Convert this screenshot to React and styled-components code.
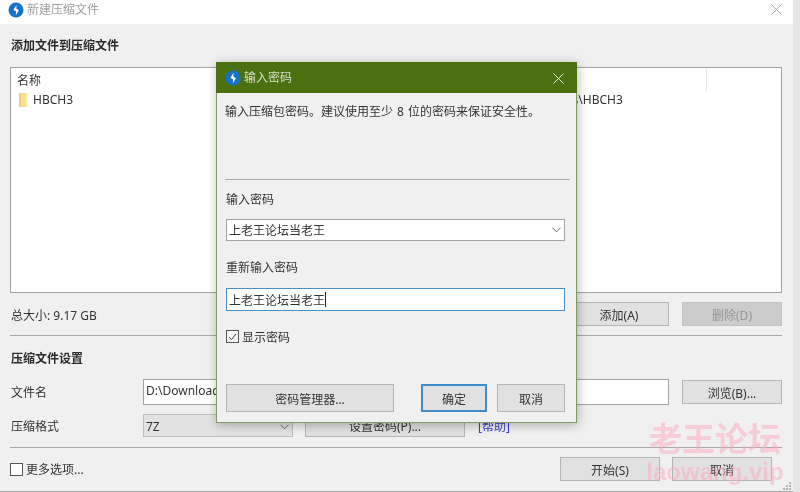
import React from "react";
import styled, {createGlobalStyle} from "styled-components";

const GlobalStyle = createGlobalStyle`
  html, body {
    margin: 0;
    padding: 0;
    background: #e6e6e6;
  }
  body {
    font-family: "Noto Sans", "Noto Sans CJK SC", sans-serif;
    font-size: 12px;
    color: #333;
  }
`;

const Page = styled.div`
  position: relative;
  width: 800px;
  height: 492px;
  overflow: hidden;
  filter: blur(0.45px);
`;

const Win = styled.div`
  width: 793px;
  height: 492px;
  box-sizing: border-box;
  background: #f0f0f0;
  border-bottom: 1px solid #a8a8a8;
`;

const TitleBar = styled.div`
  height: 24px;
  background: #fff;
  display: flex;
  align-items: flex-start;
  padding: 2px 11px 0 8px;
  box-sizing: border-box;
  color: #a0a0a0;
  line-height: 16px;
  gap: 3px;
`;

const CloseX = styled.svg`
  margin-left: auto;
  margin-top: 2px;
  width: 11px;
  height: 11px;
  stroke: ${(p) => p.$color || "#aaa"};
  stroke-width: 1;
  fill: none;
  flex: none;
`;

const Content = styled.div`
  padding: 0 11px 0 10px;
`;

const SectionTitle = styled.div`
  font-weight: 700;
  line-height: 16px;
  color: #2b2b2b;
  margin-top: ${(p) => p.$top}px;
  padding-left: 1px;
`;

const FileList = styled.div`
  height: 226px;
  box-sizing: border-box;
  margin-top: 13px;
  background: #fff;
  border: 1px solid #a3a3a3;
`;

const ListRow = styled.div`
  display: grid;
  grid-template-columns: 488px 208px 1fr;
  height: ${(p) => p.$height}px;
  line-height: 16px;
`;

const Cell = styled.div`
  padding-left: ${(p) => p.$pad || 0}px;
  padding-top: ${(p) => p.$padTop || 0}px;
  box-sizing: border-box;
  display: flex;
  align-items: center;
  gap: 5px;
  white-space: nowrap;
  ${(p) => p.$rule && "box-shadow: inset -1px 0 0 #e8e8e8;"}
`;

const InfoRow = styled.div`
  display: flex;
  align-items: center;
  margin-top: ${(p) => p.$top}px;
  gap: ${(p) => p.$gap || 0}px;
`;

const SizeLabel = styled.span`
  padding: 1px 0 0 1px;
  margin-right: auto;
`;

const Btn = styled.div`
  width: ${(p) => p.$w}px;
  height: ${(p) => p.$h || 24}px;
  box-sizing: border-box;
  flex: none;
  display: flex;
  align-items: center;
  justify-content: center;
  padding-top: 1px;
  background: ${(p) => (p.$disabled ? "#cccccc" : "#e1e1e1")};
  border: ${(p) => (p.$primary ? "2px solid #3f8ccb" : `1px solid ${p.$disabled ? "#c4c4c4" : "#b4b4b4"}`)};
  color: ${(p) => (p.$disabled ? "#969696" : "#333")};
  white-space: nowrap;
`;

const Rule = styled.div`
  height: 1px;
  background: #a9a9a9;
  margin-top: ${(p) => p.$top}px;
  margin-right: ${(p) => p.$right || 0}px;
  margin-left: ${(p) => p.$left || 0}px;
`;

const FieldLabel = styled.div`
  width: 133px;
  flex: none;
  padding-left: 1px;
  box-sizing: border-box;
`;

const TextBox = styled.div`
  width: ${(p) => p.$w || "auto"};
  height: ${(p) => p.$h || 26}px;
  margin-top: ${(p) => p.$top || 0}px;
  box-sizing: border-box;
  flex: none;
  display: flex;
  align-items: center;
  overflow: hidden;
  padding: ${(p) => p.$padTop || 0}px 3px ${(p) => p.$padBottom || 0}px 2px;
  white-space: nowrap;
  background: ${(p) => p.$bg || "#fff"};
  border: 1px solid ${(p) => p.$border || "#a3a3a3"};
`;

const BrowseBtn = styled(Btn)`
  margin-left: 13px;
`;

const PasswordBtn = styled(Btn)`
  margin: 0 13px 0 12px;
`;

const ManagerBtn = styled(Btn)`
  margin-right: auto;
`;

const HelpLink = styled.span`
  color: #3a3ad0;
  padding-top: 1px;
`;

const CheckBox = styled.span`
  width: 13px;
  height: 13px;
  box-sizing: border-box;
  flex: none;
  display: flex;
  align-items: center;
  justify-content: center;
  background: ${(p) => (p.$checked ? "#f4f4f4" : "#fff")};
  border: 1px solid #555;
`;

const CheckLabel = styled.label`
  display: flex;
  align-items: center;
  gap: 3px;
  height: 13px;
  margin-right: auto;
`;

const BottomRow = styled(InfoRow)`
  padding-right: 10px;
`;

const Modal = styled.div`
  position: absolute;
  left: 216px;
  top: 62px;
  width: 361px;
  height: 361px;
  box-sizing: border-box;
  background: #f0f0f0;
  border: 1px solid #7f9a63;
  box-shadow: 1px 2px 10px rgba(0, 0, 0, 0.28);
`;

const ModalHead = styled.div`
  height: 31px;
  margin: -1px -1px 0;
  padding: 0 13px 0 9px;
  background: #4b7012;
  color: #d6e0c4;
  display: flex;
  align-items: center;
  gap: 3px;
  line-height: 16px;
`;

const ModalBody = styled.div`
  padding: 11px 11px 0 9px;
`;

const Line = styled.div`
  line-height: 16px;
  margin-top: ${(p) => p.$top || 0}px;
`;

const Intro = styled(Line)`
  margin-left: -1px;
  word-spacing: 1px;
`;

const Caret = styled.span`
  width: 1px;
  height: 15px;
  background: #222;
`;

const Chevron = styled.svg`
  margin-left: auto;
  width: 9px;
  height: 6px;
  stroke: #666;
  fill: none;
  flex: none;
`;

const Watermark = styled.div`
  position: absolute;
  left: 646px;
  top: 420px;
  width: 138px;
  text-align: center;
  color: rgba(252, 165, 185, 0.48);
  font-weight: 700;
  pointer-events: none;
`;

const MarkTitle = styled.div`
  font-size: 33px;
  line-height: 38px;
  white-space: nowrap;
`;

const MarkSub = styled.div`
  font-family: "Liberation Sans", sans-serif;
  font-size: 24px;
  line-height: 26px;
  margin-top: 1px;
  white-space: nowrap;
`;

const Grip = styled.svg`
  position: absolute;
  left: 782px;
  top: 481px;
  width: 9px;
  height: 9px;
  fill: #b5b5b5;
`;

const AppIcon = () => (
    <svg width="16" height="16" viewBox="0 0 16 16" style={{flex: "none"}}>
        <circle cx="8" cy="8" r="7.5" fill="#1672c8"/>
        <path d="M8.6 2.8 8.3 6.6l2.6 1.7-3.1 4.9.3-3.8-2.6-1.7z" fill="#fff"/>
    </svg>
);

const FolderIcon = () => (
    <svg width="9" height="14" viewBox="0 0 9 14" style={{flex: "none", marginLeft: "2px"}}>
        <rect width="9" height="14" fill="#fbe08f"/>
        <rect width="2" height="14" fill="#f4cd68"/>
        <rect x="7" width="2" height="14" fill="#fff0bd"/>
    </svg>
);

const Tick = () => (
    <svg width="9" height="8" viewBox="0 0 9 8" fill="none" stroke="#444" strokeWidth="1">
        <path d="M1 4l2.4 2.6L8 1"/>
    </svg>
);

const X = ({color}) => (
    <CloseX $color={color} viewBox="0 0 11 11">
        <path d="M.5.5l10 10M10.5.5l-10 10"/>
    </CloseX>
);

const Down = () => (
    <Chevron viewBox="0 0 9 6">
        <path d="M.5.8 4.5 4.8 8.5.8"/>
    </Chevron>
);

const App = () => {
    return (
        <Page>
            <GlobalStyle/>
            <Win>
                <TitleBar>
                    <AppIcon/>
                    <span>新建压缩文件</span>
                    <X/>
                </TitleBar>
                <Content>
                    <SectionTitle $top={14}>添加文件到压缩文件</SectionTitle>
                    <FileList>
                        <ListRow $height={24}>
                            <Cell $pad={6} $padTop={1}>名称</Cell>
                            <Cell $rule>路径</Cell>
                            <Cell/>
                        </ListRow>
                        <ListRow $height={16}>
                            <Cell $pad={6}><FolderIcon/>HBCH3</Cell>
                            <Cell>D:\Downloads\HBCH3</Cell>
                            <Cell/>
                        </ListRow>
                    </FileList>
                    <InfoRow $top={9} $gap={13}>
                        <SizeLabel>总大小: 9.17 GB</SizeLabel>
                        <Btn $w={100}>添加(A)</Btn>
                        <Btn $w={100} $disabled>删除(D)</Btn>
                    </InfoRow>
                    <Rule $top={9}/>
                    <SectionTitle $top={15}>压缩文件设置</SectionTitle>
                    <InfoRow $top={12}>
                        <FieldLabel>文件名</FieldLabel>
                        <TextBox $w="526px" $padBottom={3}>D:\Downloads\HBCH3.7z</TextBox>
                        <BrowseBtn $w={100}>浏览(B)...</BrowseBtn>
                    </InfoRow>
                    <InfoRow $top={9}>
                        <FieldLabel>压缩格式</FieldLabel>
                        <TextBox $w="150px" $h={23} $padTop={2} $bg="#e2e2e2" $border="#bdbdbd">7Z<Down/></TextBox>
                        <PasswordBtn $w={160} $h={23}>设置密码(P)...</PasswordBtn>
                        <HelpLink>[帮助]</HelpLink>
                    </InfoRow>
                    <Rule $top={10}/>
                    <BottomRow $top={9} $gap={12}>
                        <CheckLabel><CheckBox/>更多选项...</CheckLabel>
                        <Btn $w={100}>开始(S)</Btn>
                        <Btn $w={100}>取消</Btn>
                    </BottomRow>
                </Content>
            </Win>

            <Modal>
                <ModalHead>
                    <AppIcon/>
                    <span>输入密码</span>
                    <X color="#e6eedb"/>
                </ModalHead>
                <ModalBody>
                    <Intro>输入压缩包密码。建议使用至少 8 位的密码来保证安全性。</Intro>
                    <Rule $top={59} $right={-5} $left={-1}/>
                    <Line $top={12}>输入密码</Line>
                    <TextBox $h={22} $top={11}>上老王论坛当老王<Down/></TextBox>
                    <Line $top={19}>重新输入密码</Line>
                    <TextBox $h={23} $top={12} $border="#4a90c8">上老王论坛当老王<Caret/></TextBox>
                    <InfoRow $top={19}>
                        <CheckLabel><CheckBox $checked><Tick/></CheckBox>显示密码</CheckLabel>
                    </InfoRow>
                    <InfoRow $top={41} $gap={10}>
                        <ManagerBtn $w={168} $h={28}>密码管理器...</ManagerBtn>
                        <Btn $w={66} $h={28} $primary>确定</Btn>
                        <Btn $w={68} $h={28}>取消</Btn>
                    </InfoRow>
                </ModalBody>
            </Modal>

            <Watermark>
                <MarkTitle>老王论坛</MarkTitle>
                <MarkSub>laowang.vip</MarkSub>
            </Watermark>
            <Grip viewBox="0 0 9 9">
                <rect x="7" y="1" width="2" height="2"/>
                <rect x="4" y="4" width="2" height="2"/>
                <rect x="7" y="4" width="2" height="2"/>
                <rect x="1" y="7" width="2" height="2"/>
                <rect x="4" y="7" width="2" height="2"/>
                <rect x="7" y="7" width="2" height="2"/>
            </Grip>
        </Page>
    );
};

export default App;
